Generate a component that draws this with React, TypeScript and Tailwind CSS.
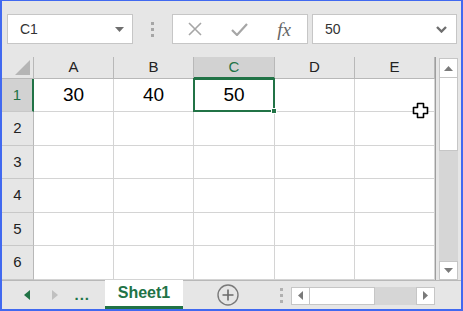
import React from 'react';

const cols = [
  { name: 'A', w: 'w-[80px]' },
  { name: 'B', w: 'w-[80px]' },
  { name: 'C', w: 'w-[81px]' },
  { name: 'D', w: 'w-[80px]' },
  { name: 'E', w: 'w-[80px]' },
];

const rowHeights = ['h-[33px]', 'h-[34px]', 'h-[33px]', 'h-[34px]', 'h-[33px]', 'h-[34px]'];

const values: Record<string, string> = { A1: '30', B1: '40', C1: '50' };

const font = { fontFamily: '"Liberation Sans", Arial, sans-serif' };

const App = () => {
  return (
    <div
      className="w-[463px] h-[311px] bg-[#e6e6e6] border-l-2 border-r-2 border-t border-b-2 border-[#4169f0] flex flex-col overflow-hidden relative"
      style={font}
    >
      {/* Toolbar */}
      <div className="h-[56px] flex items-start pt-[13px] pl-[5px]">
        <div className="w-[126px] h-[30px] bg-white border border-[#c6c6c6] flex items-center justify-between pl-[12px] pr-[8px]">
          <span className="text-[14px] text-[#333]">C1</span>
          <svg width="9" height="5" viewBox="0 0 9 5">
            <path d="M0 0 L9 0 L4.5 5 Z" fill="#6e6e6e" />
          </svg>
        </div>
        <div className="w-[39px] h-[30px] flex flex-col items-center justify-center gap-[3px]">
          <div className="w-[3px] h-[3px] bg-[#a6a6a6]" />
          <div className="w-[3px] h-[3px] bg-[#a6a6a6]" />
          <div className="w-[3px] h-[3px] bg-[#a6a6a6]" />
        </div>
        <div className="w-[136px] h-[30px] bg-white border border-[#c6c6c6] flex items-center">
          <div className="w-[44px] flex justify-center">
            <svg width="14" height="14" viewBox="0 0 14 14">
              <path d="M1 1 L13 13 M13 1 L1 13" stroke="#a6a6a6" strokeWidth="1.6" />
            </svg>
          </div>
          <div className="w-[44px] flex justify-center">
            <svg width="17" height="13" viewBox="0 0 17 13">
              <path d="M1 7 L6 12 L16 1" stroke="#a6a6a6" strokeWidth="2.2" fill="none" />
            </svg>
          </div>
          <div className="w-[46px] flex justify-center">
            <span
              className="italic text-[19px] text-[#666] leading-none"
              style={{ fontFamily: '"Liberation Serif", "Times New Roman", serif' }}
            >
              fx
            </span>
          </div>
        </div>
        <div className="ml-[4px] w-[145px] h-[30px] bg-white border border-[#c6c6c6] flex items-center justify-between pl-[12px] pr-[9px]">
          <span className="text-[14px] text-[#333]">50</span>
          <svg width="11" height="7" viewBox="0 0 11 7">
            <path d="M1 1 L5.5 5.5 L10 1" stroke="#6e6e6e" strokeWidth="2.4" fill="none" />
          </svg>
        </div>
      </div>

      {/* Grid + vertical scrollbar */}
      <div className="flex">
        <div className="flex flex-col border-r border-[#9e9e9e]">
          {/* Column headers */}
          <div className="flex h-[22px]">
            <div className="w-[32px] h-full border-r border-b border-[#b8b8b8] bg-[#e6e6e6] flex items-end justify-end pr-[3px] pb-[3px]">
              <svg width="15" height="15" viewBox="0 0 15 15">
                <path d="M15 0 L15 15 L0 15 Z" fill="#b5b5b5" />
              </svg>
            </div>
            {cols.map((c) => (
              <div
                key={c.name}
                className={`${c.w} h-full flex items-center justify-center text-[15px] ${
                  c.name === 'C'
                    ? 'bg-[#d2d2d2] text-[#217346] border-b-2 border-b-[#217346] border-r border-r-[#b8b8b8]'
                    : 'bg-[#e6e6e6] text-[#222] border-b border-r border-[#b8b8b8]'
                }`}
              >
                {c.name}
              </div>
            ))}
          </div>
          {/* Rows */}
          {rowHeights.map((h, i) => (
            <div key={i} className={`flex ${h} ${i === 0 ? 'relative z-10' : ''}`}>
              <div
                className={`w-[32px] h-full flex items-center justify-center text-[15px] border-b border-[#c8c8c8] ${
                  i === 0
                    ? 'bg-[#d2d2d2] text-[#217346] border-r-2 border-r-[#217346]'
                    : 'bg-[#e6e6e6] text-[#222] border-r border-r-[#b8b8b8]'
                }`}
              >
                {i + 1}
              </div>
              {cols.map((c) => {
                const key = `${c.name}${i + 1}`;
                const selected = key === 'C1';
                return (
                  <div
                    key={key}
                    className={`${c.w} h-full bg-white border-r border-b border-[#d4d4d4] relative flex items-center justify-center text-[19px] text-black ${
                      selected ? 'z-10' : ''
                    }`}
                  >
                    {values[key]}
                    {selected && (
                      <div className="absolute -left-[1px] -top-[1px] -right-[1px] -bottom-[1px] border-2 border-[#217346]">
                        <div className="absolute -right-[4px] -bottom-[4px] w-[6px] h-[6px] bg-[#217346] border border-white" />
                      </div>
                    )}
                  </div>
                );
              })}
            </div>
          ))}
        </div>
        {/* Vertical scrollbar */}
        <div className="flex-1 flex flex-col pl-[3px] pr-[2px] pt-[1px]">
          <div className="w-[19px] h-[20px] bg-white border border-[#c6c6c6] flex items-center justify-center">
            <svg width="9" height="5" viewBox="0 0 9 5">
              <path d="M0 5 L9 5 L4.5 0 Z" fill="#7a7a7a" />
            </svg>
          </div>
          <div className="w-[19px] h-[73px] bg-white border border-[#c6c6c6] border-t-0" />
          <div className="w-[19px] flex-1 bg-[#d6d6d6]" />
          <div className="w-[19px] h-[19px] bg-white border border-[#c6c6c6] flex items-center justify-center">
            <svg width="9" height="5" viewBox="0 0 9 5">
              <path d="M0 0 L9 0 L4.5 5 Z" fill="#7a7a7a" />
            </svg>
          </div>
        </div>
      </div>

      {/* Sheet tab bar */}
      <div className="flex-1 flex border-t border-[#b8b8b8] bg-[#e6e6e6]">
        <div className="w-[103px] flex items-center">
          <div className="w-[30px] flex justify-end pr-[2px]">
            <svg width="6" height="10" viewBox="0 0 6 10">
              <path d="M6 0 L6 10 L0 5 Z" fill="#217346" />
            </svg>
          </div>
          <div className="w-[28px] flex justify-end pr-[2px]">
            <svg width="6" height="10" viewBox="0 0 6 10">
              <path d="M0 0 L0 10 L6 5 Z" fill="#c0c0c0" />
            </svg>
          </div>
          <div className="w-[30px] flex justify-end text-[15px] text-[#217346] font-bold tracking-[1px] leading-none pb-[2px]">
            ...
          </div>
        </div>
        <div className="w-[78px] -mt-[1px] bg-white border-b-[3px] border-[#217346] flex items-center justify-center text-[16px] font-bold text-[#217346]">
          Sheet1
        </div>
        <div className="w-[88px] flex items-center justify-center pl-[2px]">
          <svg width="22" height="22" viewBox="0 0 22 22">
            <circle cx="11" cy="11" r="10" stroke="#7a7a7a" strokeWidth="1.4" fill="none" />
            <path d="M11 5.5 L11 16.5 M5.5 11 L16.5 11" stroke="#6a6a6a" strokeWidth="1.6" />
          </svg>
        </div>
        <div className="w-[20px] flex flex-col items-center justify-center gap-[3px]">
          <div className="w-[3px] h-[3px] bg-[#b0b0b0]" />
          <div className="w-[3px] h-[3px] bg-[#b0b0b0]" />
          <div className="w-[3px] h-[3px] bg-[#b0b0b0]" />
        </div>
        <div className="flex items-center pt-[1px]">
          <div className="w-[19px] h-[18px] bg-white border border-[#c6c6c6] flex items-center justify-center">
            <svg width="5" height="9" viewBox="0 0 5 9">
              <path d="M5 0 L5 9 L0 4.5 Z" fill="#7a7a7a" />
            </svg>
          </div>
          <div className="w-[65px] h-[18px] bg-white border border-[#c6c6c6] border-l-0" />
          <div className="w-[41px] h-[18px] bg-[#d6d6d6]" />
          <div className="w-[19px] h-[18px] bg-white border border-[#c6c6c6] flex items-center justify-center">
            <svg width="5" height="9" viewBox="0 0 5 9">
              <path d="M0 0 L0 9 L5 4.5 Z" fill="#7a7a7a" />
            </svg>
          </div>
        </div>
      </div>

      {/* Mouse cursor */}
      <svg className="absolute left-[410px] top-[101px] z-20" width="17" height="17" viewBox="0 0 17 17">
        <path
          d="M5.5 1.5 H11.5 V5.5 H15.5 V11.5 H11.5 V15.5 H5.5 V11.5 H1.5 V5.5 H5.5 Z"
          fill="white"
          stroke="black"
          strokeWidth="1.6"
          strokeLinejoin="round"
        />
      </svg>
    </div>
  );
};

export default App;
